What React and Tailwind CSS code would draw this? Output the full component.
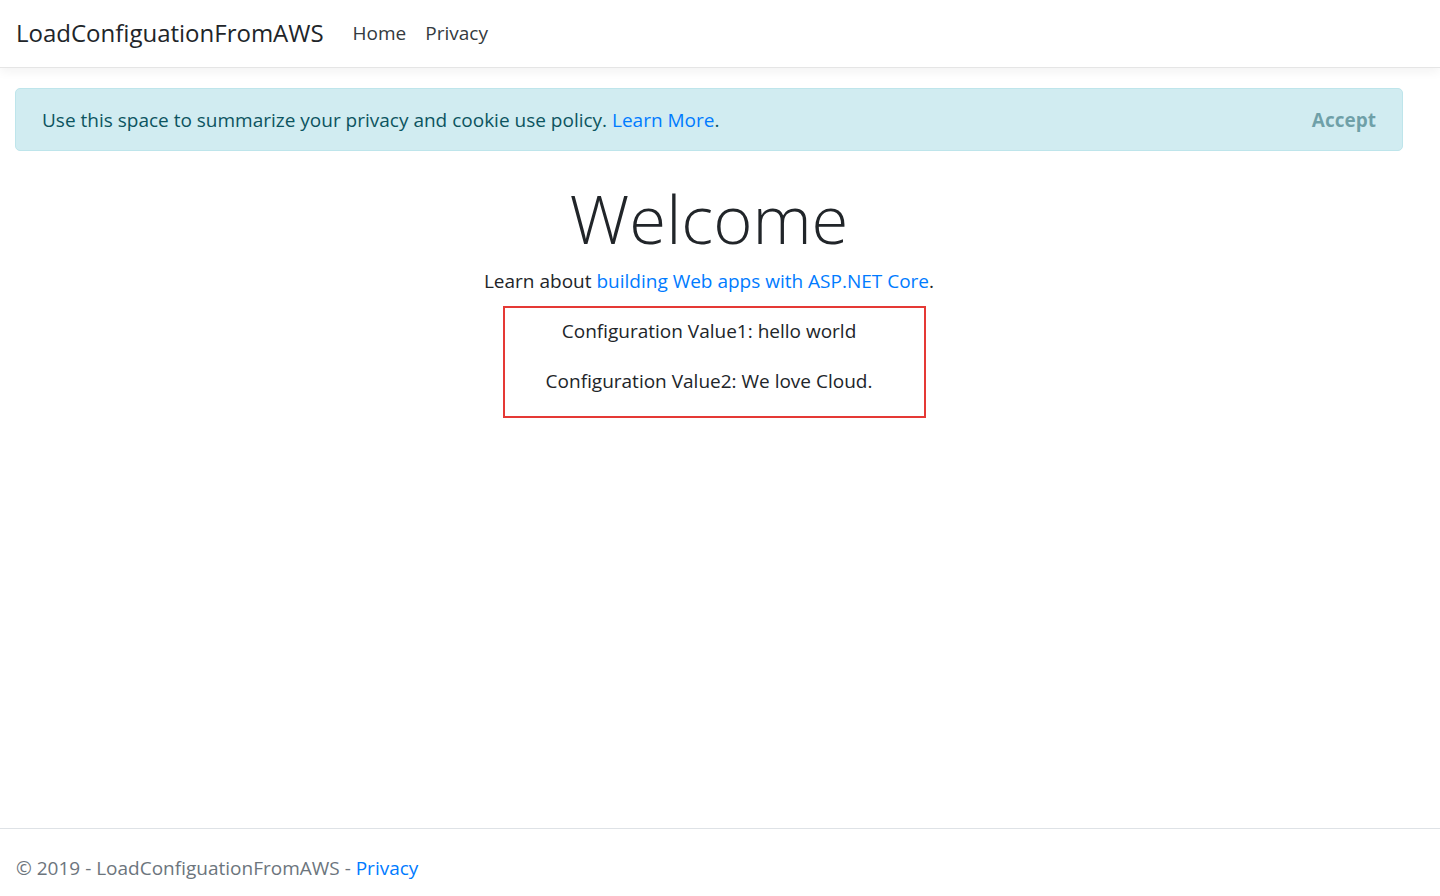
const App = () => {
  return (
    <div className="min-h-screen flex flex-col bg-white text-[#212529] font-['Open_Sans',sans-serif] text-[19px]">
      <header className="h-[68px] border-b border-[#e5e5e5] shadow-[0_4px_10px_rgba(0,0,0,0.05)] flex items-center px-[16px] pb-[1px]">
        <span className="text-[24px] text-[#212529] leading-none mr-[29px]">LoadConfiguationFromAWS</span>
        <nav className="flex gap-[19px] text-[19px] text-[#343a40]">
          <a href="#">Home</a>
          <a href="#">Privacy</a>
        </nav>
      </header>

      <main className="flex-1 pl-[15px] pr-[37px] pt-[20px]">
        <div className="h-[63px] flex items-center justify-between bg-[#d1ecf1] border border-[#bee5eb] rounded-[5px] px-[26px] pt-[2px] text-[#0c5460]">
          <span>
            Use this space to summarize your privacy and cookie use policy.{" "}
            <a href="#" className="text-[#007bff]">Learn More</a>.
          </span>
          <button className="font-bold text-[#0c5460]/50">Accept</button>
        </div>

        <div className="text-center mt-[25px]">
          <h1 className="text-[67px] font-light leading-[84px]">Welcome</h1>
          <p className="mt-[6px] leading-[30px]">
            Learn about <a href="#" className="text-[#007bff]">building Web apps with ASP.NET Core</a>.
          </p>
        </div>

        <div className="w-[423px] ml-[488px] mt-[10px] border-2 border-[#e53935] pt-[8px] pr-[11px] text-center leading-[30px]">
          <p className="mb-[20px]">Configuration Value1: hello world</p>
          <p className="mb-[20px]">Configuration Value2: We love Cloud.</p>
        </div>
      </main>

      <footer className="h-[68px] border-t border-[#dee2e6] flex items-center px-[16px] pt-[12px] text-[#6c757d]">
        <span>
          © 2019 - LoadConfiguationFromAWS - <a href="#" className="text-[#007bff]">Privacy</a>
        </span>
      </footer>
    </div>
  );
};

export default App;
